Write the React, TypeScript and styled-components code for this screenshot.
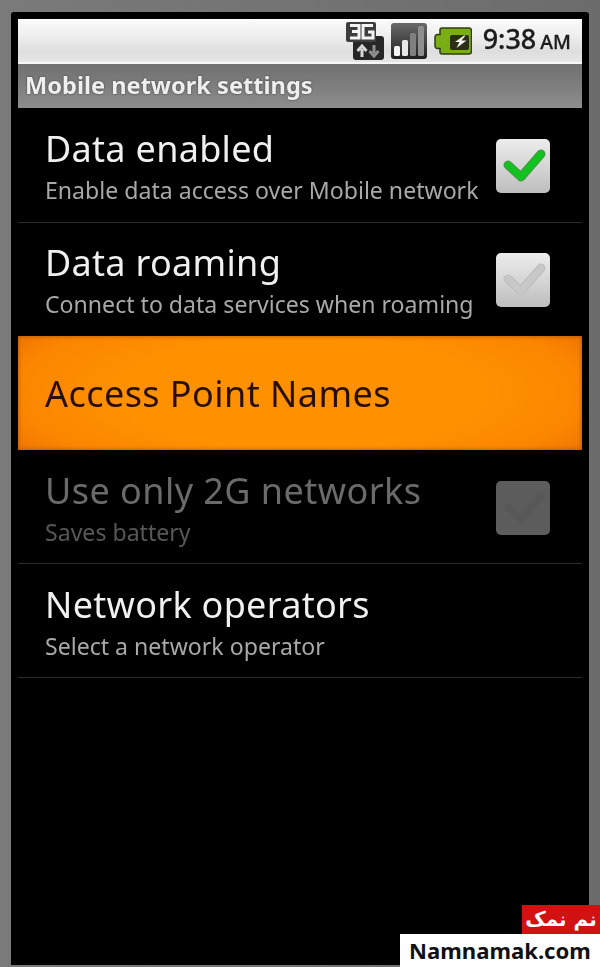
import React from 'react';
import styled, { createGlobalStyle } from 'styled-components';

const Global = createGlobalStyle`
  html, body { margin: 0; padding: 0; background: #6e6e6e; }
  #root { width: 600px; height: 967px; overflow: hidden; }
`;

const Page = styled.div`
  position: relative;
  width: 600px;
  height: 967px;
  box-sizing: border-box;
  padding: 12px 11px 2px 11px;
  background: linear-gradient(90deg, #7a7a7a 0, #6c6c6c 100%);
  font-family: "Noto Sans", "Open Sans", sans-serif;
  overflow: hidden;
`;

const Phone = styled.div`
  height: 100%;
  box-sizing: border-box;
  padding: 7px 7px 0 7px;
  background: #000;
  border-radius: 3px 3px 0 0;
  display: flex;
  flex-direction: column;
  filter: blur(0.45px);
`;

const StatusBar = styled.div`
  height: 45px;
  flex: none;
  box-sizing: border-box;
  border-bottom: 2px solid #f6f6f6;
  background: linear-gradient(180deg, #fbfbfb 0%, #ececec 45%, #dedede 75%, #e6e6e6 100%);
  display: flex;
  align-items: center;
  justify-content: flex-end;
  padding-right: 11px;
`;

const StatusIcon = styled.svg<{ $gap?: number }>`
  display: block;
  flex: none;
  margin-left: ${p => p.$gap ?? 0}px;
`;

const Clock = styled.div`
  margin-left: 11px;
  font-family: "Noto Sans", sans-serif;
  font-weight: 500;
  font-size: 27px;
  line-height: 30px;
  color: #1c1c1c;
  white-space: nowrap;
  -webkit-text-stroke: 0.3px #1c1c1c;
`;

const Meridiem = styled.span`
  font-size: 19.5px;
  margin-left: 4px;
`;

const TitleBar = styled.div`
  height: 44px;
  flex: none;
  box-sizing: border-box;
  padding: 0 0 2px 7px;
  background: linear-gradient(180deg, #707070 0%, #7e7e7e 50%, #8d8d8d 100%);
  display: flex;
  align-items: center;
  font-weight: 700;
  font-size: 23.6px;
  color: #efefef;
  text-shadow: 0 0 2px #333;
  white-space: nowrap;
`;

const List = styled.div`
  flex: none;
  margin-top: 1px;
  display: flex;
  flex-direction: column;
`;

const Row = styled.div<{ $sel?: boolean; $low?: boolean }>`
  height: 114px;
  flex: none;
  box-sizing: border-box;
  padding: ${p => (p.$low ? 2 : 0)}px 32px 0 27px;
  display: flex;
  align-items: center;
  justify-content: space-between;
  border-bottom: 1px solid #2a2a2a;
  ${p =>
    p.$sel
      ? `
    border-bottom: none;
    margin-top: -1px;
    background: radial-gradient(ellipse 60% 90% at 50% 50%, #ff9000 55%, #fb8500 85%, #ef7604 100%);
    box-shadow: inset 0 0 4px #a5500f;
  `
      : ''}
`;

const RowText = styled.div<{ $single?: boolean }>`
  display: flex;
  flex-direction: column;
  margin-top: ${p => (p.$single ? 2 : 0)}px;
`;

const Title = styled.div<{ $dim?: boolean; $sel?: boolean }>`
  font-size: 36px;
  line-height: 46px;
  letter-spacing: ${p => (p.$sel || p.$dim ? 0.45 : 0.3)}px;
  color: ${p => (p.$sel ? '#2a0f00' : p.$dim ? '#6a6a6a' : '#f0f0f0')};
  white-space: nowrap;
`;

const Sub = styled.div<{ $dim?: boolean }>`
  margin-top: 2px;
  font-size: 23.1px;
  line-height: 32px;
  color: ${p => (p.$dim ? '#575757' : '#a8a8a8')};
  white-space: nowrap;
`;

const Box = styled.div<{ $variant: 'on' | 'muted' | 'off' }>`
  width: 54px;
  height: 54px;
  flex: none;
  border-radius: 5px;
  background: ${p =>
    p.$variant === 'off'
      ? '#5c5c5c'
      : 'linear-gradient(180deg, #ececec 0%, #d6d6d6 50%, #bdbdbd 100%)'};
`;

const Watermark = styled.div`
  position: absolute;
  right: 0;
  bottom: 0;
  display: flex;
  flex-direction: column;
  align-items: flex-end;
`;

const RedTag = styled.div`
  width: 78px;
  height: 29px;
  background: #d21113;
  color: #fff;
  font-family: "DejaVu Sans", sans-serif;
  font-weight: 700;
  font-size: 20px;
  line-height: 29px;
  text-align: center;
  direction: rtl;
`;

const WhiteTag = styled.div`
  width: 200px;
  height: 33px;
  background: #fff;
  color: #111;
  font-family: "Noto Sans", sans-serif;
  font-weight: 700;
  font-size: 22.1px;
  line-height: 33px;
  text-align: center;
`;

const Check = ({ color, edge }: { color: string; edge: string }) => (
  <svg width="54" height="54" viewBox="0 0 54 54" style={{ display: 'block' }}>
    <path d="M12 26 L25 38 L45 15" fill="none" stroke={edge} strokeWidth="9" strokeLinecap="round" strokeLinejoin="round" />
    <path d="M12 26 L25 38 L45 15" fill="none" stroke={color} strokeWidth="6" strokeLinecap="round" strokeLinejoin="round" />
  </svg>
);

const ThreeG = () => (
  <StatusIcon width="38" height="38" viewBox="0 0 38 38">
    <rect x="7" y="14" width="31" height="24" rx="3" fill="#262626" />
    <rect x="0" y="0" width="30" height="20" rx="2" fill="#3e3e3e" />
    <path d="M4 3.500h9v12.500H4M6 9.500h7M27 3.500H17v12.500h10v-6h-5" fill="none" stroke="#f4f4f4" strokeWidth="3" />
    <path d="M16 35v-8M11.500 29l4.500-5 4.500 5" fill="none" stroke="#d6d6d6" strokeWidth="3" />
    <path d="M28 23v8M23.500 29l4.500 5 4.500-5" fill="none" stroke="#8f8f8f" strokeWidth="3" />
  </StatusIcon>
);

const Signal = () => (
  <StatusIcon $gap={7} width="36" height="36" viewBox="0 0 36 36">
    <defs>
      <linearGradient id="sig" x1="0" y1="0" x2="0" y2="1">
        <stop offset="0" stopColor="#6a6a6a" />
        <stop offset="1" stopColor="#1e1e1e" />
      </linearGradient>
    </defs>
    <rect x="0" y="0" width="36" height="36" rx="3" fill="url(#sig)" />
    <rect x="3" y="23" width="6" height="10" rx="1.500" fill="#f4f4f4" />
    <rect x="11" y="17" width="6" height="16" rx="1.500" fill="#e8e8e8" />
    <rect x="19" y="10" width="6" height="23" rx="1.500" fill="#808080" />
    <rect x="27" y="3" width="6" height="30" rx="1.500" fill="#8e8e8e" />
  </StatusIcon>
);

const Battery = () => (
  <StatusIcon $gap={7} width="38" height="28" viewBox="0 0 38 28">
    <path d="M8 1h27a2.500 2.500 0 0 1 2.500 2.500v21a2.500 2.500 0 0 1-2.500 2.500H8a2 2 0 0 1-2-2v-3.500H3.500a2.500 2.500 0 0 1-2.500-2.500v-9a2.500 2.500 0 0 1 2.500-2.500H6V3a2 2 0 0 1 2-2z" fill="#7aae14" stroke="#2e3d12" strokeWidth="1.500" />
    <rect x="16" y="8" width="19" height="15" rx="2" fill="#2a3016" />
    <path d="M30 8.500l-9 6.500h4.500l-3 6 10-7.500h-5l4-5z" fill="#f4f4f4" />
  </StatusIcon>
);

export default function App() {
  return (
    <Page>
      <Global />
      <Phone>
        <StatusBar>
          <ThreeG />
          <Signal />
          <Battery />
          <Clock>
            9:38<Meridiem>AM</Meridiem>
          </Clock>
        </StatusBar>
        <TitleBar>Mobile network settings</TitleBar>
        <List>
          <Row>
            <RowText>
              <Title>Data enabled</Title>
              <Sub>Enable data access over Mobile network</Sub>
            </RowText>
            <Box $variant="on">
              <Check color="#10c41e" edge="#3f9f42" />
            </Box>
          </Row>
          <Row>
            <RowText>
              <Title>Data roaming</Title>
              <Sub>Connect to data services when roaming</Sub>
            </RowText>
            <Box $variant="muted">
              <Check color="#c8c8c8" edge="#c0c0c0" />
            </Box>
          </Row>
          <Row $sel>
            <RowText $single>
              <Title $sel>Access Point Names</Title>
            </RowText>
          </Row>
          <Row $low>
            <RowText>
              <Title $dim>Use only 2G networks</Title>
              <Sub $dim>Saves battery</Sub>
            </RowText>
            <Box $variant="off">
              <Check color="#585858" edge="#5a5a5a" />
            </Box>
          </Row>
          <Row $low>
            <RowText>
              <Title>Network operators</Title>
              <Sub>Select a network operator</Sub>
            </RowText>
          </Row>
        </List>
      </Phone>
      <Watermark>
        <RedTag>نم نمک</RedTag>
        <WhiteTag>Namnamak.com</WhiteTag>
      </Watermark>
    </Page>
  );
}
